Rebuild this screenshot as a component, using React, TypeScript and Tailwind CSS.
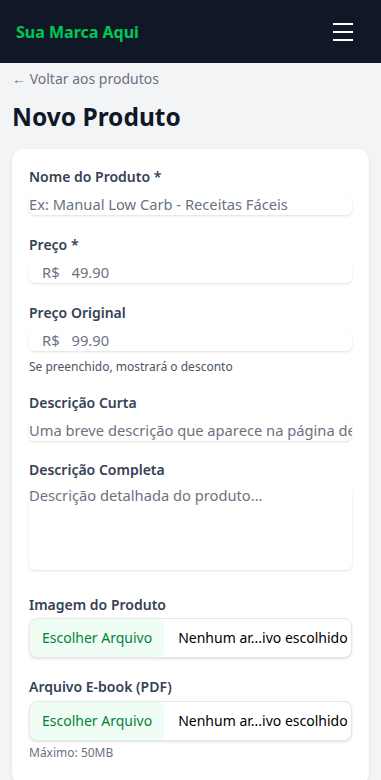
import { useState } from 'react';

function Label({ children, mb }: { children: React.ReactNode; mb: string }) {
  return <label className={`block text-sm font-semibold text-gray-700 leading-5 ${mb}`}>{children}</label>;
}

function FilePicker() {
  return (
    <label className="flex items-center h-10 rounded-lg border border-gray-200 bg-white shadow-sm overflow-hidden cursor-pointer">
      <span className="h-full flex items-center px-3 bg-green-50 text-green-700 text-sm rounded-md whitespace-nowrap">
        Escolher Arquivo
      </span>
      <span className="ml-[14px] text-sm text-black whitespace-nowrap">Nenhum ar...ivo escolhido</span>
    </label>
  );
}

function PriceInput({ placeholder }: { placeholder: string }) {
  return (
    <div className="flex items-center h-[21px] rounded-md shadow-sm text-[14.7px] text-gray-500">
      <span className="pl-[13px] pr-3">R$</span>
      <input placeholder={placeholder} className="flex-1 min-w-0 outline-none placeholder:text-gray-500" />
    </div>
  );
}

export default function App() {
  const [nome, setNome] = useState('');
  const [desc, setDesc] = useState('');

  return (
    <div className="min-h-screen bg-gray-100" style={{ fontFamily: '"Noto Sans", sans-serif' }}>
      <header className="h-[63px] bg-gray-900 flex items-center justify-between pl-4 pr-7">
        <span className="text-green-500 font-bold text-base">Sua Marca Aqui</span>
        <button className="text-white">
          <svg width="20" height="18" viewBox="0 0 20 18" fill="none" stroke="currentColor" strokeWidth="2">
            <path d="M0 1h20M0 9h20M0 17h20" />
          </svg>
        </button>
      </header>

      <main className="px-3 pt-[6px]">
        <a className="block text-sm text-gray-500 leading-5">← Voltar aos produtos</a>
        <h1 className="mt-3 text-[24.5px] font-bold text-gray-900 leading-8">Novo Produto</h1>

        <div className="mt-4 bg-white rounded-xl shadow-sm px-[17px] pt-[18px] pb-6">
          <Label mb="mb-[7px]">Nome do Produto *</Label>
          <input
            value={nome}
            onChange={(e) => setNome(e.target.value)}
            placeholder="Ex: Manual Low Carb - Receitas Fáceis"
            className="block w-full h-[21px] rounded-md shadow-sm outline-none text-[14.7px] placeholder:text-gray-500"
          />

          <div className="mt-5">
            <Label mb="mb-[7px]">Preço *</Label>
            <PriceInput placeholder="49.90" />
          </div>

          <div className="mt-5">
            <Label mb="mb-[7px]">Preço Original</Label>
            <PriceInput placeholder="99.90" />
            <p className="mt-2 text-xs text-gray-600 leading-4">Se preenchido, mostrará o desconto</p>
          </div>

          <div className="mt-[18px]">
            <Label mb="mb-[7px]">Descrição Curta</Label>
            <input
              placeholder="Uma breve descrição que aparece na página de vendas"
              className="block w-full h-[21px] rounded-md shadow-sm outline-none text-[14.7px] placeholder:text-gray-500"
            />
          </div>

          <div className="mt-[19px]">
            <Label mb="mb-[5px]">Descrição Completa</Label>
            <textarea
              value={desc}
              onChange={(e) => setDesc(e.target.value)}
              placeholder="Descrição detalhada do produto..."
              className="block w-full h-[85px] rounded-md shadow-sm outline-none resize-none text-[14.7px] leading-5 placeholder:text-gray-500"
            />
          </div>

          <div className="mt-[25px]">
            <Label mb="mb-[3px]">Imagem do Produto</Label>
            <FilePicker />
          </div>

          <div className="mt-[19px]">
            <Label mb="mb-1">Arquivo E-book (PDF)</Label>
            <FilePicker />
            <p className="mt-1 text-xs text-gray-500 leading-4">Máximo: 50MB</p>
          </div>
        </div>
      </main>
    </div>
  );
}
